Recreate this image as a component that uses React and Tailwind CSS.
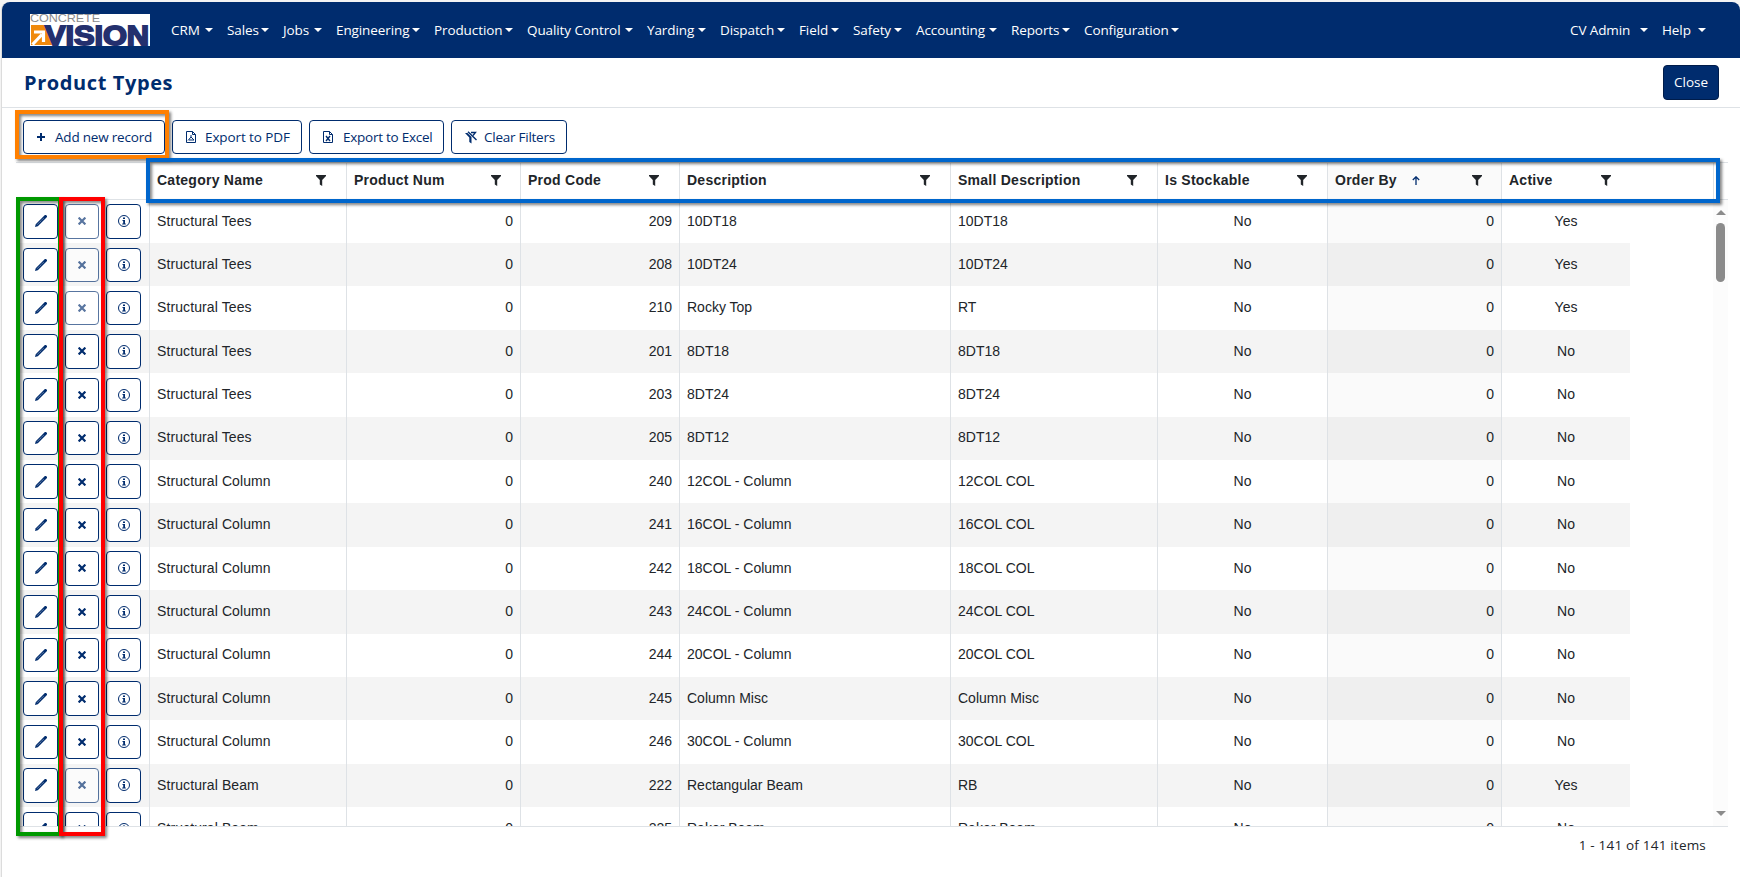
const NAV_ITEMS = [
  { label: "CRM", box: "w-[56px]" },
  { label: "Sales", box: "w-[56px]" },
  { label: "Jobs", box: "w-[53px]" },
  { label: "Engineering", box: "w-[98px]" },
  { label: "Production", box: "w-[93px]" },
  { label: "Quality Control", box: "w-[120px]" },
  { label: "Yarding", box: "w-[73px]" },
  { label: "Dispatch", box: "w-[79px]" },
  { label: "Field", box: "w-[54px]" },
  { label: "Safety", box: "w-[63px]" },
  { label: "Accounting", box: "w-[95px]" },
  { label: "Reports", box: "w-[73px]" },
  { label: "Configuration", box: "w-[109px]" },
];

const USER_ITEMS = [
  { label: "CV Admin", box: "w-[92px]" },
  { label: "Help", box: "w-[58px]" },
];

const COLUMNS = [
  { label: "Category Name", box: "w-[197px]", pad: "pr-[20px]" },
  { label: "Product Num", box: "w-[174px]", pad: "pr-[19px]" },
  { label: "Prod Code", box: "w-[159px]", pad: "pr-[20px]" },
  { label: "Description", box: "w-[271px]", pad: "pr-[20px]" },
  { label: "Small Description", box: "w-[207px]", pad: "pr-[20px]" },
  { label: "Is Stockable", box: "w-[170px]", pad: "pr-[20px]" },
  { label: "Order By", box: "w-[174px]", pad: "pr-[19px]", sorted: true },
  { label: "Active", box: "w-[212px]", pad: "pr-[102px]" },
];

// category, prod code, description, small description, active
const ROWS = [
  ["Structural Tees", 209, "10DT18", "10DT18", true],
  ["Structural Tees", 208, "10DT24", "10DT24", true],
  ["Structural Tees", 210, "Rocky Top", "RT", true],
  ["Structural Tees", 201, "8DT18", "8DT18", false],
  ["Structural Tees", 203, "8DT24", "8DT24", false],
  ["Structural Tees", 205, "8DT12", "8DT12", false],
  ["Structural Column", 240, "12COL - Column", "12COL COL", false],
  ["Structural Column", 241, "16COL - Column", "16COL COL", false],
  ["Structural Column", 242, "18COL - Column", "18COL COL", false],
  ["Structural Column", 243, "24COL - Column", "24COL COL", false],
  ["Structural Column", 244, "20COL - Column", "20COL COL", false],
  ["Structural Column", 245, "Column Misc", "Column Misc", false],
  ["Structural Column", 246, "30COL - Column", "30COL COL", false],
  ["Structural Beam", 222, "Rectangular Beam", "RB", true],
  ["Structural Beam", 225, "Raker Beam", "Raker Beam", false],
];

const Logo = () => (
  <svg width="120" height="32" viewBox="0 0 120 32" className="shrink-0">
    <rect width="120" height="32" fill="#fff" />
    <text x="0" y="8.4" fontFamily="Liberation Sans, sans-serif" fontSize="11" fill="#8a8a8c" textLength="70" lengthAdjust="spacingAndGlyphs">CONCRETE</text>
    <path d="M1 11h14l9 20H1z" fill="#f08a0c" />
    <path d="M2.5 30.5 12 20.5M4 18h9.5v10" stroke="#fff" strokeWidth="3.2" fill="none" />
    <text x="15" y="31" fontFamily="Liberation Sans, sans-serif" fontWeight="700" fontSize="28" fill="#24306e" stroke="#24306e" strokeWidth="1.8" textLength="104" lengthAdjust="spacingAndGlyphs">VISION</text>
  </svg>
);

const Caret = () => (
  <svg width="8" height="4" viewBox="0 0 8 4" className="shrink-0">
    <path d="M0 0h8L4 4z" fill="currentColor" />
  </svg>
);

const ScrollArrow = ({ className }) => (
  <svg width="10" height="5" viewBox="0 0 10 5" className={`shrink-0 ${className}`}>
    <path d="M0 0h10L5 5z" fill="currentColor" />
  </svg>
);

const FilterIcon = () => (
  <svg width="10" height="11" viewBox="0 0 10 11">
    <path d="M0 0h10v1L6.2 5v6L3.8 9.6V5L0 1z" fill="currentColor" />
  </svg>
);

const PlusIcon = () => (
  <svg width="8" height="8" viewBox="0 0 8 8" className="shrink-0">
    <path d="M4 0v8M0 4h8" stroke="currentColor" strokeWidth="2" />
  </svg>
);

const FileIcon = ({ children }) => (
  <svg width="10" height="12" viewBox="0 0 10 12" fill="none" stroke="currentColor" className="shrink-0">
    <path d="M.5.5h6l3 3v8h-9zM6.5.5v3h3" />
    {children}
  </svg>
);

const ClearFilterIcon = () => (
  <svg width="12" height="13" viewBox="0 0 12 13" fill="none" stroke="currentColor" className="shrink-0">
    <path d="M0 2h2.5L6.5 6v6.5L4.3 11V6.5z" fill="currentColor" stroke="none" />
    <path d="M3 .8 11.5 9" strokeWidth="1.4" />
    <path d="M6 1.5h4.5L8 4.5" strokeWidth="1.3" />
  </svg>
);

const CrossIcon = () => (
  <svg width="8" height="8" viewBox="0 0 8 8">
    <path d="m.6.6 6.8 6.8M7.4.6.6 7.4" stroke="currentColor" strokeWidth="2.2" />
  </svg>
);

const InfoIcon = () => (
  <svg width="12" height="12" viewBox="0 0 12 12" fill="none" stroke="currentColor">
    <circle cx="6" cy="6" r="5.5" />
    <path d="M5 2.5h2v1.4H5zM4.5 5H7v3.5h.8v1H4.2v-1h1V6h-.7z" fill="currentColor" stroke="none" />
  </svg>
);

const PencilIcon = () => (
  <svg width="12" height="12" viewBox="0 0 12 12">
    <path d="M0 12l.7-2.8L8.9 1 9.9 0h1.1L12 1v1.1L2.8 11.3z" fill="currentColor" />
    <path d="M2.3 9.5 8.8 3" stroke="#fff" strokeWidth=".6" strokeDasharray="1 .5" />
  </svg>
);

const NavMenu = ({ items }) => (
  <div className="flex">
    {items.map((item) => (
      <div key={item.label} className={`flex shrink-0 items-center justify-between pr-[14px] whitespace-nowrap ${item.box}`}>
        {item.label}
        <Caret />
      </div>
    ))}
  </div>
);

const ToolButton = ({ className, icon, children }) => (
  <button className={`flex h-[34px] items-center rounded-[4px] border border-[#002c6e] bg-white pl-[13px] font-['Open_Sans','Noto_Sans',sans-serif] text-[13.5px] tracking-[-0.1px] whitespace-nowrap text-[#002c6e] ${className}`}>
    {icon}
    <span>{children}</span>
  </button>
);

const RowButton = ({ className = "", faded, children }) => (
  <button className={`flex h-[34.4px] items-center justify-center rounded-[4px] border border-[#002c6e] bg-white text-[#002c6e] ${faded ? "opacity-65" : ""} ${className}`}>
    {children}
  </button>
);

const Frame = ({ className }) => (
  <div className={`pointer-events-none absolute border-4 drop-shadow-[2px_2px_1.5px_rgba(0,0,0,0.5)] ${className}`} />
);

const Row = ({ row, striped }) => {
  const [category, code, description, small, active] = row;
  const cell = "flex shrink-0 items-center border-l border-[#dee2e6] px-[7px] pb-[0.6px]";
  return (
    <div className={`flex h-[43.4px] w-[1614px] shrink-0 ${striped ? "bg-[#f4f4f4]" : "bg-white"}`}>
      <div className="flex w-[133px] shrink-0 items-center pl-[7px]">
        <RowButton className="w-[35px]"><PencilIcon /></RowButton>
        <RowButton className="ml-[7px] w-[34px]" faded={active}><CrossIcon /></RowButton>
        <RowButton className="ml-[7px] w-[35px]"><InfoIcon /></RowButton>
      </div>
      <div className={`${cell} w-[197px] tracking-[0.1px]`}>{category}</div>
      <div className={`${cell} w-[174px] justify-end`}>0</div>
      <div className={`${cell} w-[159px] justify-end`}>{code}</div>
      <div className={`${cell} w-[271px]`}>{description}</div>
      <div className={`${cell} w-[207px]`}>{small}</div>
      <div className={`${cell} w-[170px] justify-center`}>No</div>
      <div className={`${cell} w-[174px] justify-end ${striped ? "bg-[#efefef]" : "bg-[#fafafa]"}`}>0</div>
      <div className={`${cell} w-[129px] justify-center`}>{active ? "Yes" : "No"}</div>
    </div>
  );
};

const App = () => {
  return (
    <div className="relative h-[877px] w-[1740px] overflow-hidden bg-[#f3f3f3] pt-[2px] pl-[1px] font-['Liberation_Sans',Arial,sans-serif] text-[14px] text-[#212529]">
      <div className="flex h-[875px] flex-col rounded-t-lg border-l border-[#dcdcdc] bg-white">
        <nav className="flex h-[56px] shrink-0 items-center rounded-t-lg bg-[#002c6e] pr-[20px] pl-[28px] font-['Open_Sans','Noto_Sans',sans-serif] text-[13.5px] tracking-[-0.1px] text-white">
          <Logo />
          <div className="ml-[21px] flex grow justify-between">
            <NavMenu items={NAV_ITEMS} />
            <NavMenu items={USER_ITEMS} />
          </div>
        </nav>

        <header className="flex h-[50px] shrink-0 items-center justify-between border-b border-[#dee2e6] pr-[21px] pl-[22px] font-['Open_Sans','Noto_Sans',sans-serif]">
          <h1 className="text-[20px] font-bold tracking-[0.6px] text-[#002c6e]">Product Types</h1>
          <button className="h-[35px] w-[56px] rounded-[4px] border border-[#001c4a] bg-[#002c6e] text-[13.5px] text-white">Close</button>
        </header>

        <div className="flex h-[54px] shrink-0 gap-[7px] pt-[12px] pl-[21px]">
          <ToolButton className="w-[142px] gap-[10px] tracking-[-0.2px]" icon={<PlusIcon />}>Add new record</ToolButton>
          <ToolButton className="w-[130px] gap-[9px]" icon={<FileIcon><path d="M2 9.5 5 6V4M5 6l3 3H3" /></FileIcon>}>Export to PDF</ToolButton>
          <ToolButton className="w-[135px] gap-[10px] tracking-[-0.25px]" icon={<FileIcon><path d="m3 5 4 5M7 5l-4 5" strokeWidth="1.4" /></FileIcon>}>Export to Excel</ToolButton>
          <ToolButton className="w-[116px] gap-[7px] tracking-[-0.25px]" icon={<ClearFilterIcon />}>Clear Filters</ToolButton>
        </div>

        <div className="ml-[14px] flex h-[38px] w-[1712px] shrink-0 border-y border-[#dee2e6] font-bold">
          <div className="w-[133px] shrink-0" />
          {COLUMNS.map((col) => (
            <div key={col.label} className={`flex shrink-0 items-center border-l border-[#dee2e6] pb-[2px] pl-[7px] tracking-[0.25px] ${col.box} ${col.pad} ${col.sorted ? "bg-[#fafafa]" : ""}`}>
              <span>{col.label}</span>
              {col.sorted && (
                <svg width="8" height="9" viewBox="0 0 8 9" className="ml-[15px] text-[#002c6e]" fill="none" stroke="currentColor" strokeWidth="1.3">
                  <path d="M4 9V1M.8 4 4 .8 7.2 4" />
                </svg>
              )}
              <span className="ml-auto"><FilterIcon /></span>
            </div>
          ))}
          <div className="border-l border-[#dee2e6]" />
        </div>

        <div className="ml-[14px] flex h-[627px] w-[1712px] shrink-0 overflow-hidden border-b border-[#dee2e6]">
          <div className="-mt-[0.4px] flex flex-col">
            {ROWS.map((row, i) => (
              <Row key={row[1]} row={row} striped={i % 2 === 1} />
            ))}
          </div>
          <div className="ml-auto flex w-[15px] flex-col items-center bg-[#fcfcfc] pt-[10px] pb-[10px] text-[#8b8b8b]">
            <ScrollArrow className="rotate-180" />
            <div className="mt-[8px] h-[59px] w-[9px] rounded-full bg-[#8b8b8b]" />
            <ScrollArrow className="mt-auto" />
          </div>
        </div>

        <footer className="flex justify-end pt-[8px] pr-[34px] font-['Open_Sans','Noto_Sans',sans-serif] text-[13.5px] tracking-[0.2px]">1 - 141 of 141 items</footer>
      </div>

      <Frame className="top-[110px] left-[15px] h-[49px] w-[154px] border-[#ff8000]" />
      <Frame className="top-[197px] left-[16px] h-[639px] w-[46px] border-[#009900]" />
      <Frame className="top-[197px] left-[59px] h-[639px] w-[46px] border-[#ff0000]" />
      <Frame className="top-[158px] left-[146px] h-[45px] w-[1574px] border-[#0066cc]" />
    </div>
  );
};

export default App;
